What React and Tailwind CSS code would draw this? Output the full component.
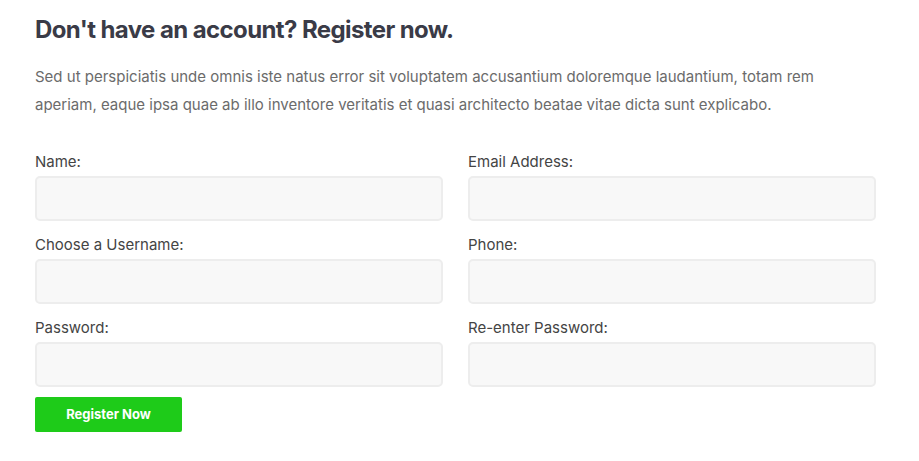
export default function App() {
  const fields = [
    ['Name:', 'Email Address:'],
    ['Choose a Username:', 'Phone:'],
    ['Password:', 'Re-enter Password:'],
  ];

  return (
    <div className="min-h-screen bg-white px-[35px] pt-[10px]" style={{ fontFamily: 'Inter, "Noto Sans", sans-serif' }}>
      <h1 className="text-[24px] leading-[40px] font-bold text-[#3a3b47] tracking-[-0.6px]">
        Don't have an account? Register now.
      </h1>
      <p className="mt-[13px] w-[842px] text-[15px] leading-[28px] text-[#6b6b6b]">
        Sed ut perspiciatis unde omnis iste natus error sit voluptatem accusantium doloremque laudantium, totam rem aperiam, eaque ipsa quae ab illo inventore veritatis et quasi architecto beatae vitae dicta sunt explicabo.
      </p>
      <form className="mt-[33px] w-[841px]" onSubmit={(e) => e.preventDefault()}>
        <div className="grid grid-cols-2 gap-x-[25px] gap-y-[14px]">
          {fields.flat().map((label) => (
            <div key={label}>
              <label className="block text-[15px] leading-[20px] text-[#444]">{label}</label>
              <input
                type="text"
                className="mt-[4px] block h-[45px] w-full rounded-[5px] border-2 border-[#ededed] bg-[#f8f8f8] outline-none"
              />
            </div>
          ))}
        </div>
        <button
          type="submit"
          className="mt-[10px] h-[35px] w-[147px] rounded-[2px] bg-[#1ecb19] text-[13px] font-bold text-white"
        >
          Register Now
        </button>
      </form>
    </div>
  );
}
